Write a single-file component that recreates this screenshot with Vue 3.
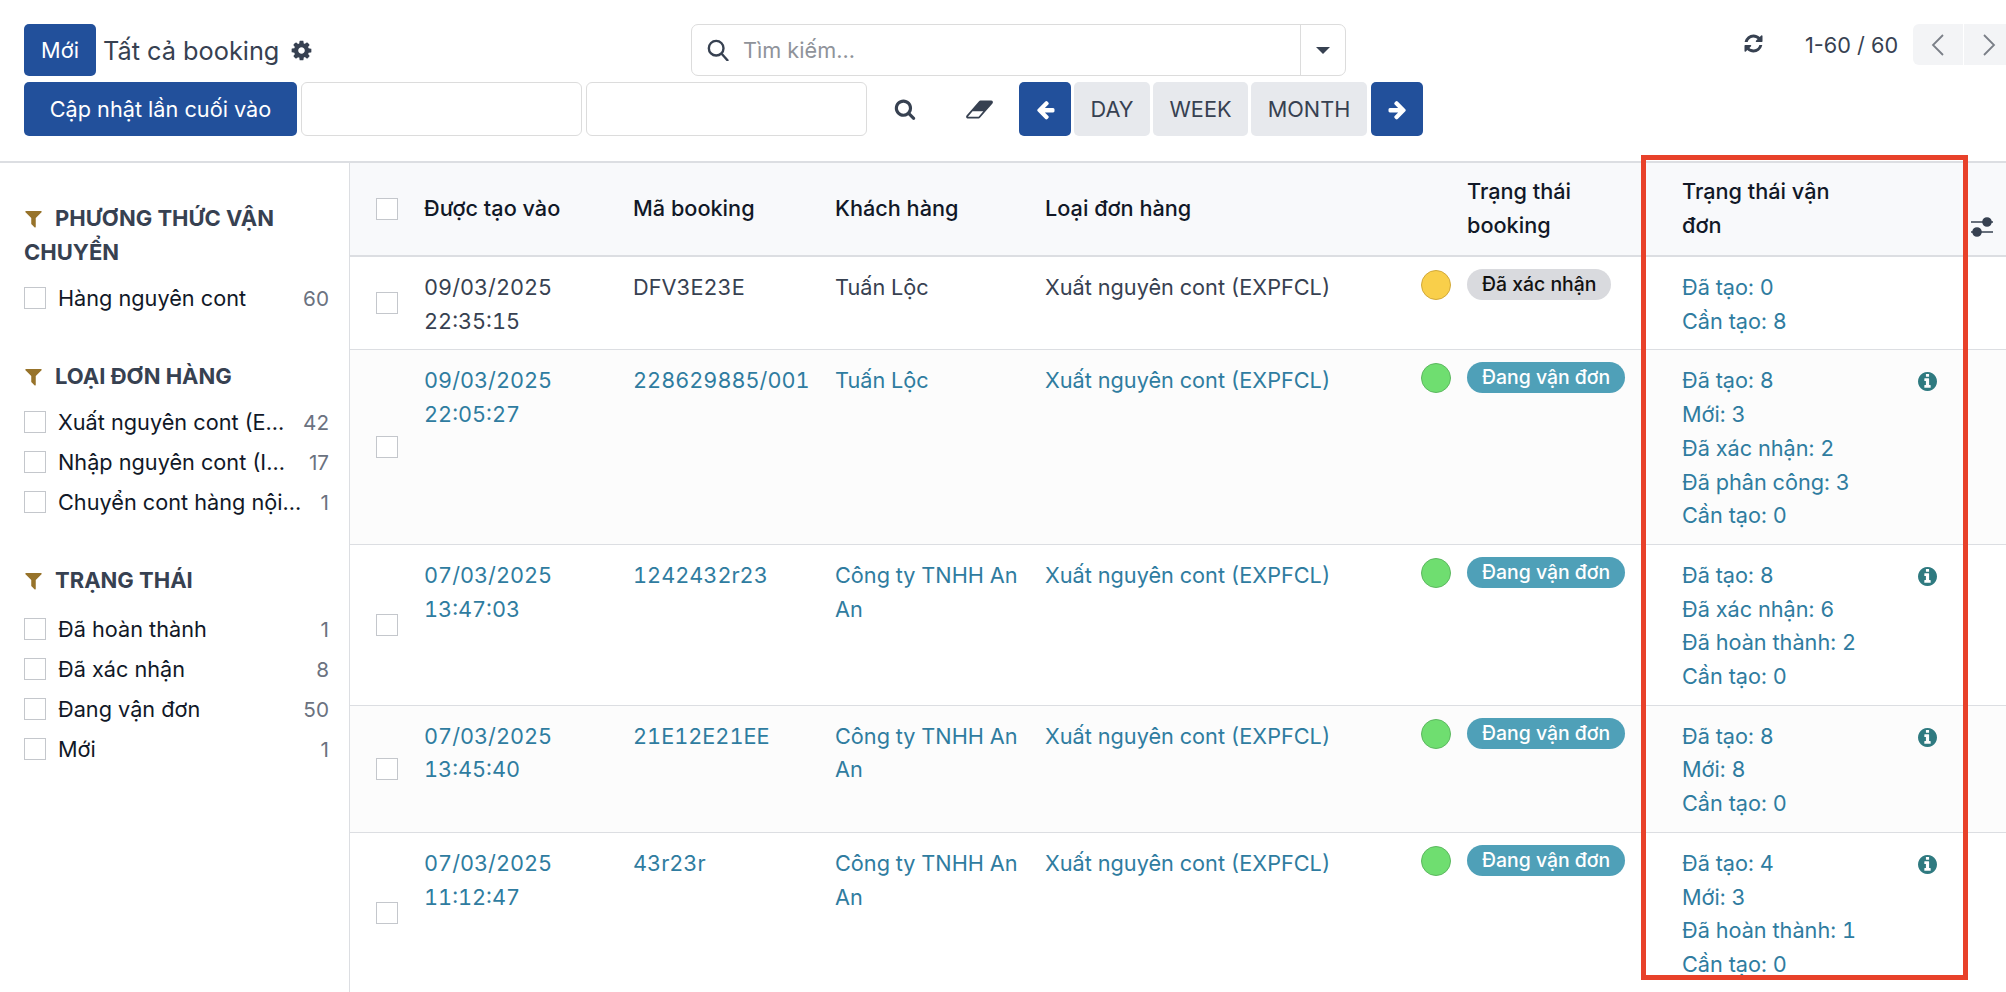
<script setup>
const filterGroups = [
  { title: 'Phương thức vận chuyển', items: [{ label: 'Hàng nguyên cont', count: 60 }] },
  {
    title: 'Loại đơn hàng',
    items: [
      { label: 'Xuất nguyên cont (EXPFCL)', count: 42 },
      { label: 'Nhập nguyên cont (IMPFCL)', count: 17 },
      { label: 'Chuyển cont hàng nội địa', count: 1 },
    ],
  },
  {
    title: 'Trạng thái',
    items: [
      { label: 'Đã hoàn thành', count: 1 },
      { label: 'Đã xác nhận', count: 8 },
      { label: 'Đang vận đơn', count: 50 },
      { label: 'Mới', count: 1 },
    ],
  },
]

const rows = [
  {
    date: '09/03/2025', time: '22:35:15', code: 'DFV3E23E', customer: 'Tuấn Lộc', link: false,
    dot: 'yellow', badge: 'Đã xác nhận', badgeClass: 'badge-gray', info: false,
    lines: ['Đã tạo: 0', 'Cần tạo: 8'],
  },
  {
    date: '09/03/2025', time: '22:05:27', code: '228629885/001', customer: 'Tuấn Lộc', link: true,
    dot: 'green', badge: 'Đang vận đơn', badgeClass: 'badge-teal', info: true,
    lines: ['Đã tạo: 8', 'Mới: 3', 'Đã xác nhận: 2', 'Đã phân công: 3', 'Cần tạo: 0'],
  },
  {
    date: '07/03/2025', time: '13:47:03', code: '1242432r23', customer: 'Công ty TNHH An An', link: true,
    dot: 'green', badge: 'Đang vận đơn', badgeClass: 'badge-teal', info: true,
    lines: ['Đã tạo: 8', 'Đã xác nhận: 6', 'Đã hoàn thành: 2', 'Cần tạo: 0'],
  },
  {
    date: '07/03/2025', time: '13:45:40', code: '21E12E21EE', customer: 'Công ty TNHH An An', link: true,
    dot: 'green', badge: 'Đang vận đơn', badgeClass: 'badge-teal', info: true,
    lines: ['Đã tạo: 8', 'Mới: 8', 'Cần tạo: 0'],
  },
  {
    date: '07/03/2025', time: '11:12:47', code: '43r23r', customer: 'Công ty TNHH An An', link: true,
    dot: 'green', badge: 'Đang vận đơn', badgeClass: 'badge-teal', info: true,
    lines: ['Đã tạo: 4', 'Mới: 3', 'Đã hoàn thành: 1', 'Cần tạo: 0'],
  },
]

const icons = {
  search: 'M1216 832q0-185-131.5-316.5t-316.5-131.5-316.5 131.5-131.5 316.5 131.5 316.5 316.5 131.5 316.5-131.5 131.5-316.5zm512 832q0 52-38 90t-90 38q-54 0-90-38l-343-342q-179 124-399 124-143 0-273.5-55.5t-225-150-150-225-55.5-273.5 55.5-273.5 150-225 225-150 273.5-55.5 273.5 55.5 225 150 150 225 55.5 273.5q0 220-124 399l343 343q37 37 37 90z',
  cog: 'M1152 896q0-106-75-181t-181-75-181 75-75 181 75 181 181 75 181-75 75-181zm512-109v222q0 12-8 23t-20 13l-185 28q-19 54-39 91 35 50 107 138 10 12 10 25t-9 23q-27 37-99 108t-94 71q-12 0-26-9l-138-108q-44 23-91 38-16 136-29 186-7 28-36 28h-222q-14 0-24.5-8.5t-11.5-21.5l-28-184q-49-16-90-37l-141 107q-10 9-25 9-14 0-25-11-126-114-165-168-7-10-7-23 0-12 8-23 15-21 51-66.5t54-70.5q-27-50-41-99l-183-27q-13-2-21-12.5t-8-23.5v-222q0-12 8-23t19-13l186-28q14-46 39-92-40-57-107-138-10-12-10-24 0-10 9-23 26-36 98.5-107.5t94.5-71.5q13 0 26 10l138 107q44-23 91-38 16-136 29-186 7-28 36-28h222q14 0 24.5 8.5t11.5 21.5l28 184q49 16 90 37l142-107q9-9 24-9 13 0 25 10 129 119 165 170 7 8 7 22 0 12-8 23-15 21-51 66.5t-54 70.5q26 50 41 98l183 28q13 2 21 12.5t8 23.5z',
  refresh: 'M1639 1056q0 5-1 7-64 268-268 434.5t-478 166.5q-146 0-282.5-55t-243.5-157l-129 129q-19 19-45 19t-45-19-19-45v-448q0-26 19-45t45-19h448q26 0 45 19t19 45-19 45l-137 137q71 66 161 102t187 36q134 0 250-65t186-179q11-17 53-117 8-23 30-23h192q13 0 22.5 9.5t9.5 22.5zm25-800v448q0 26-19 45t-45 19h-448q-26 0-45-19t-19-45 19-45l138-138q-148-137-349-137-134 0-250 65t-186 179q-11 17-53 117-8 23-30 23h-199q-13 0-22.5-9.5t-9.5-22.5v-7q65-268 270-434.5t480-166.5q146 0 284 55.5t245 156.5l130-129q19-19 45-19t45 19 19 45z',
  left: 'M1664 896v128q0 53-32.5 90.5t-84.5 37.5h-704l293 294q38 36 38 90t-38 90l-75 76q-37 37-90 37-52 0-91-37l-651-652q-37-37-37-90 0-52 37-91l651-650q38-38 91-38 52 0 90 38l75 74q38 38 38 91t-38 91l-293 293h704q52 0 84.5 37.5t32.5 90.5z',
  right: 'M1600 960q0 54-37 91l-651 651q-39 37-91 37-51 0-90-37l-75-75q-38-38-38-91t38-91l293-293h-704q-52 0-84.5-37.5t-32.5-90.5v-128q0-53 32.5-90.5t84.5-37.5h704l-293-294q-38-36-38-90t38-90l75-75q38-38 90-38 53 0 91 38l651 651q37 35 37 90z',
  info: 'M1152 1376v-160q0-14-9-23t-23-9h-96v-512q0-14-9-23t-23-9h-320q-14 0-23 9t-9 23v160q0 14 9 23t23 9h96v320h-96q-14 0-23 9t-9 23v160q0 14 9 23t23 9h448q14 0 23-9t9-23zm-128-896v-160q0-14-9-23t-23-9h-192q-14 0-23 9t-9 23v160q0 14 9 23t23 9h192q14 0 23-9t9-23zm640 416q0 209-103 385.5t-279.5 279.5-385.5 103-385.5-103-279.5-279.5-103-385.5 103-385.5 279.5-279.5 385.5-103 385.5 103 279.5 279.5 103 385.5z',
  filter: 'M1595 295q17 41-14 70l-493 493v742q0 42-39 59-13 5-25 5-27 0-45-19l-256-256q-19-19-19-45v-486l-493-493q-31-29-14-70 17-39 59-39h1280q42 0 59 39z',
  eraser: 'M896 1408l336-384h-768l-336 384h768zm1013-1077q15 34 9.5 71.5t-30.5 65.5l-896 1024q-38 44-96 44h-768q-38 0-69.5-20.5t-47.5-54.5q-15-34-9.5-71.5t30.5-65.5l896-1024q38-44 96-44h768q38 0 70 20.5t47 54.5z',
}
</script>

<template>
  <div class="page">
    <!-- top bar -->
    <header class="topbar">
      <div class="bar-row first">
        <div class="bar-left">
          <button class="btn btn-primary btn-new">Mới</button>
          <span class="title">Tất cả booking</span>
          <svg class="gear" viewBox="0 0 1792 1792"><path :d="icons.cog" /></svg>
        </div>
        <div class="search">
          <svg class="search-glass" viewBox="0 0 24 24"><circle cx="10" cy="10" r="8" /><path d="M16 16l7 8" /></svg>
          <span class="search-text">Tìm kiếm...</span>
          <span class="search-drop"><span class="caret"></span></span>
        </div>
        <div class="bar-right">
          <svg class="refresh" viewBox="0 0 1792 1792"><path :d="icons.refresh" /></svg>
          <span class="pager-text">1-60 / 60</span>
          <div class="pager">
            <span class="pager-btn">
              <svg viewBox="0 0 14 24"><path d="M12 2L2 12l10 10" /></svg>
            </span>
            <span class="pager-btn">
              <svg viewBox="0 0 14 24"><path d="M2 2l10 10L2 22" /></svg>
            </span>
          </div>
        </div>
      </div>
      <div class="bar-row second">
        <button class="btn btn-primary btn-update">Cập nhật lần cuối vào</button>
        <div class="date-input"></div>
        <div class="date-input"></div>
        <svg class="tool-search" viewBox="0 0 1792 1792"><path :d="icons.search" /></svg>
        <svg class="tool-eraser" viewBox="0 0 1920 1792"><path :d="icons.eraser" /></svg>
        <button class="btn btn-primary btn-arrow">
          <svg viewBox="0 0 1792 1792"><path :d="icons.left" /></svg>
        </button>
        <button class="btn btn-light day">DAY</button>
        <button class="btn btn-light week">WEEK</button>
        <button class="btn btn-light month">MONTH</button>
        <button class="btn btn-primary btn-arrow">
          <svg viewBox="0 0 1792 1792"><path :d="icons.right" /></svg>
        </button>
      </div>
    </header>

    <div class="content">
      <!-- filter panel -->
      <aside class="sidebar">
        <section v-for="group in filterGroups" :key="group.title" class="group">
          <h3 class="group-title">
            <svg class="funnel" viewBox="0 0 1792 1792"><path :d="icons.filter" /></svg>{{ group.title }}
          </h3>
          <div v-for="item in group.items" :key="item.label" class="filter-item">
            <span class="check"></span>
            <span class="filter-label">{{ item.label }}</span>
            <span class="filter-count">{{ item.count }}</span>
          </div>
        </section>
      </aside>

      <!-- list -->
      <main class="list">
        <table class="grid">
          <colgroup>
            <col style="width: 59px" />
            <col style="width: 209px" />
            <col style="width: 202px" />
            <col style="width: 210px" />
            <col style="width: 376px" />
            <col style="width: 46px" />
            <col style="width: 215px" />
            <col style="width: 205px" />
            <col style="width: 94px" />
            <col style="width: 40px" />
          </colgroup>
          <thead>
            <tr>
              <th class="cell-check"><span class="check"></span></th>
              <th>Được tạo vào</th>
              <th>Mã booking</th>
              <th>Khách hàng</th>
              <th>Loại đơn hàng</th>
              <th></th>
              <th>Trạng thái booking</th>
              <th>Trạng thái vận đơn</th>
              <th></th>
              <th class="cell-options">
                <svg class="sliders" viewBox="0 0 24 20">
                  <path d="M1 5h22M1 15h22" />
                  <circle cx="17" cy="5" r="4" />
                  <circle cx="7" cy="15" r="4" />
                </svg>
              </th>
            </tr>
          </thead>
          <tbody>
            <tr v-for="(row, i) in rows" :key="i" :class="{ striped: i % 2 === 1, linked: row.link }">
              <td class="cell-check"><span class="check"></span></td>
              <td>{{ row.date }}<br />{{ row.time }}</td>
              <td>{{ row.code }}</td>
              <td>{{ row.customer }}</td>
              <td>Xuất nguyên cont (EXPFCL)</td>
              <td class="cell-dot"><span class="dot" :class="row.dot"></span></td>
              <td class="cell-badge"><span class="badge" :class="row.badgeClass">{{ row.badge }}</span></td>
              <td class="cell-lines"><div v-for="line in row.lines" :key="line">{{ line }}</div></td>
              <td class="cell-info">
                <svg v-if="row.info" class="info" viewBox="128 128 1536 1536"><path :d="icons.info" /></svg>
              </td>
              <td></td>
            </tr>
          </tbody>
        </table>
      </main>
    </div>

    <!-- highlight drawn over the column -->
    <div class="highlight"></div>
  </div>
</template>

<style scoped>
.page {
  position: relative;
  width: 2006px;
  height: 992px;
  overflow: hidden;
  background: #fff;
  font-family: Inter, "Noto Sans", sans-serif;
  font-size: 21.7px;
  color: #374151;
}

/* top bar */
.topbar {
  height: 163px;
  box-sizing: border-box;
  padding: 24px 0 0 24px;
  border-bottom: 2px solid #dcdee2;
}

.bar-row {
  display: flex;
}

.bar-row.first {
  height: 52px;
  align-items: flex-start;
}

.bar-row.second {
  margin-top: 6px;
  height: 54px;
  align-items: stretch;
}

.bar-left {
  display: flex;
  align-items: center;
  flex: none;
  width: 667px;
  height: 52px;
}

.btn {
  flex: none;
  border: 0;
  border-radius: 5px;
  font-family: inherit;
  font-size: 21.7px;
  padding: 0;
}

.btn-primary {
  background: #22509b;
  color: #fff;
}

.btn-light {
  background: #e7e9ed;
  color: #374151;
  margin-left: 3px;
}

.btn-new {
  width: 72px;
  height: 52px;
}

.title {
  margin-left: 7px;
  font-size: 25.3px;
  color: #374151;
}

.gear {
  width: 23px;
  height: 23px;
  margin-left: 11px;
  fill: #374151;
}

.search {
  display: flex;
  align-items: center;
  flex: none;
  width: 655px;
  height: 52px;
  box-sizing: border-box;
  border: 1.5px solid #dcdcdc;
  border-radius: 7px;
}

.search-glass {
  width: 22px;
  height: 22px;
  margin-left: 15px;
  fill: none;
  stroke: #374151;
  stroke-width: 2.6;
}

.search-text {
  margin-left: 14px;
  color: #8f939a;
  flex: 1;
}

.search-drop {
  display: flex;
  align-items: center;
  justify-content: center;
  width: 44px;
  height: 100%;
  border-left: 1.5px solid #dcdcdc;
}

.caret {
  width: 0;
  height: 0;
  border-left: 7px solid transparent;
  border-right: 7px solid transparent;
  border-top: 7px solid #374151;
}

.bar-right {
  display: flex;
  flex: none;
  align-items: flex-start;
  margin-left: 397px;
}

.refresh {
  flex: none;
  width: 21px;
  height: 21px;
  margin-top: 9px;
  fill: #374151;
}

.pager-text {
  width: 94px;
  margin-left: 41px;
  margin-top: 9px;
  line-height: 24px;
  white-space: nowrap;
  color: #374151;
}

.pager {
  display: flex;
  flex: none;
  gap: 1px;
  margin-left: 14px;
  height: 41px;
  border-radius: 6px;
  overflow: hidden;
}

.pager-btn {
  display: flex;
  align-items: center;
  justify-content: center;
  width: 50px;
  background: #f3f4f6;
}

.pager-btn svg {
  width: 14px;
  height: 24px;
  fill: none;
  stroke: #7a7f87;
  stroke-width: 1.8;
}

.btn-update {
  width: 273px;
}

.date-input {
  flex: none;
  width: 281px;
  margin-left: 4px;
  box-sizing: border-box;
  border: 1.5px solid #dcdcdc;
  border-radius: 6px;
}

.tool-search {
  align-self: center;
  flex: none;
  width: 22px;
  height: 22px;
  margin-left: 27px;
  fill: #374151;
}

.tool-eraser {
  align-self: center;
  flex: none;
  width: 27px;
  height: 25px;
  margin-left: 50px;
  fill: #374151;
}

.btn-arrow {
  display: flex;
  align-items: center;
  justify-content: center;
  width: 52px;
}

.btn-arrow svg {
  width: 21px;
  height: 21px;
  fill: #fff;
}

.tool-eraser + .btn-arrow {
  margin-left: 26px;
}

.btn-light + .btn-arrow {
  margin-left: 4px;
}

.day { width: 76px; }
.week { width: 95px; }
.month { width: 116px; }

/* content */
.content {
  display: flex;
  height: 829px;
}

.sidebar {
  width: 350px;
  flex-shrink: 0;
  box-sizing: border-box;
  padding: 38px 20px 0 24px;
  border-right: 1.5px solid #dcdee2;
}

.group + .group {
  margin-top: 41px;
}

.group-title {
  margin: 0 0 9px;
  font-size: 22px;
  font-weight: 700;
  line-height: 34px;
  text-transform: uppercase;
  color: #374151;
}

.group:last-child .group-title {
  margin-bottom: 12px;
}

.funnel {
  width: 21px;
  height: 21px;
  margin-left: -1.5px;
  margin-right: 11.5px;
  vertical-align: -3px;
  fill: #97732a;
}

.filter-item {
  display: flex;
  align-items: center;
  height: 40px;
  color: #111827;
}

.check {
  display: inline-block;
  width: 22px;
  height: 22px;
  box-sizing: border-box;
  border: 1.5px solid #c4c7cc;
  background: #fff;
  flex-shrink: 0;
}

.filter-label {
  flex: 1;
  min-width: 0;
  margin-left: 12px;
  margin-right: 16px;
  white-space: nowrap;
  overflow: hidden;
  text-overflow: ellipsis;
}

.filter-count {
  font-size: 20.7px;
  color: #6b7280;
}

.list {
  flex: 1;
  min-width: 0;
}

.grid {
  width: 1656px;
  table-layout: fixed;
  border-collapse: collapse;
}

th {
  height: 92px;
  padding: 0 8px 0 15px;
  background: #f8f9fb;
  border-bottom: 2px solid #dcdee2;
  font-weight: 500;
  line-height: 33.7px;
  text-align: left;
  color: #111827;
}

td {
  padding: 14px 8px 11px 15px;
  line-height: 33.7px;
  vertical-align: top;
  border-bottom: 1.5px solid #dcdee2;
  font-variant-numeric: tabular-nums;
}

.striped td {
  background: #fcfcfc;
}

.linked td,
.cell-lines {
  color: #2f7ca0;
}

th.cell-check,
td.cell-check {
  padding: 0 0 0 26px;
  vertical-align: middle;
}

.cell-check .check {
  display: block;
}

.cell-options {
  padding: 0;
}

.sliders {
  display: block;
  width: 24px;
  height: 20px;
  margin: 36px 0 0 4px;
  fill: #374151;
  stroke: #374151;
  stroke-width: 1.6;
}

td.cell-dot {
  padding: 13px 0 0 15px;
}

.dot {
  display: block;
  width: 30px;
  height: 30px;
  box-sizing: border-box;
  border-radius: 50%;
  border: 1.5px solid;
}

.dot.yellow {
  background: #f9cf4a;
  border-color: #d2a93a;
}

.dot.green {
  background: #6fde70;
  border-color: #5db860;
}

td.cell-badge {
  padding: 12px 0 0 15px;
}

.badge {
  display: block;
  width: fit-content;
  height: 31px;
  padding: 0 15px;
  border-radius: 16px;
  font-size: 19.4px;
  font-weight: 500;
  line-height: 31px;
  white-space: nowrap;
}

.badge-gray {
  background: #d9dade;
  color: #111;
}

.badge-teal {
  background: #4fa0b8;
  color: #fff;
}

td.cell-info {
  padding: 22px 0 0 46px;
}

.info {
  display: block;
  width: 19px;
  height: 19px;
  fill: #2f7a80;
}

/* overlay */
.highlight {
  position: absolute;
  left: 1641px;
  top: 155px;
  width: 327px;
  height: 825px;
  box-sizing: border-box;
  border: 5px solid #e8412a;
  pointer-events: none;
}
</style>
